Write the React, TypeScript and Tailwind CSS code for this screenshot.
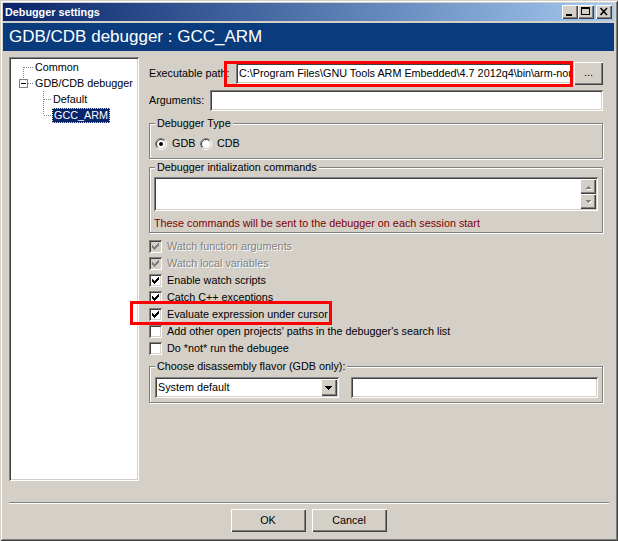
import React from 'react';

const sunken = 'shadow-[inset_1px_1px_#808080,inset_-1px_-1px_#ffffff,inset_2px_2px_#404040,inset_-2px_-2px_#d4d0c8]';
const raised = 'shadow-[inset_1px_1px_#ffffff,inset_-1px_-1px_#404040,inset_-2px_-2px_#808080]';

// classic 7x7 check mark, rows of [from, to]
const checkRows: [number, number][][] = [
  [[6, 6]],
  [[5, 6]],
  [[0, 0], [4, 6]],
  [[0, 1], [3, 5]],
  [[0, 4]],
  [[1, 3]],
  [[2, 2]],
];

const CheckBox: React.FC<{ checked?: boolean; disabled?: boolean }> = ({ checked, disabled }) => (
  <div className={`w-[13px] h-[13px] shrink-0 ${sunken} ${disabled ? 'bg-[#d4d0c8]' : 'bg-white'}`}>
    {checked && (
      <svg width="13" height="13" shapeRendering="crispEdges">
        {checkRows.map((row, y) =>
          row.map(([a, b], i) => (
            <rect key={`${y}-${i}`} x={3 + a} y={3 + y} width={b - a + 1} height={1} fill={disabled ? '#808080' : '#000'} />
          ))
        )}
      </svg>
    )}
  </div>
);

const Radio: React.FC<{ checked?: boolean }> = ({ checked }) => (
  <svg width="12" height="12" className="shrink-0">
    <circle cx="6" cy="6" r="4.5" fill="#fff" />
    <path d="M2.1 9.9 A5.5 5.5 0 0 1 9.9 2.1" stroke="#808080" fill="none" />
    <path d="M9.9 2.1 A5.5 5.5 0 0 1 2.1 9.9" stroke="#fff" fill="none" />
    <path d="M2.8 9.2 A4.5 4.5 0 0 1 9.2 2.8" stroke="#404040" fill="none" />
    <path d="M9.2 2.8 A4.5 4.5 0 0 1 2.8 9.2" stroke="#d4d0c8" fill="none" />
    {checked && <circle cx="6" cy="6" r="2" fill="#000" />}
  </svg>
);

const TitleBtn: React.FC<{ kind: 'min' | 'max' | 'close'; className?: string }> = ({ kind, className }) => (
  <div className={`w-[16px] h-[14px] bg-[#d4d0c8] ${raised} ${className ?? ''}`}>
    <svg width="16" height="14" shapeRendering="crispEdges">
      {kind === 'min' && <rect x="4" y="9" width="6" height="2" fill="#000" />}
      {kind === 'max' && (
        <g fill="none" stroke="#000">
          <rect x="3.5" y="2.5" width="8" height="7" />
          <line x1="3" y1="3.5" x2="12" y2="3.5" />
        </g>
      )}
      {kind === 'close' && (
        <g stroke="#000" strokeWidth="1.6" shapeRendering="auto">
          <line x1="4.5" y1="3" x2="11" y2="10" />
          <line x1="11" y1="3" x2="4.5" y2="10" />
        </g>
      )}
    </svg>
  </div>
);

const Group: React.FC<{ label: string; className?: string; children?: React.ReactNode }> = ({ label, className, children }) => (
  <div className={`relative border border-[#808080] shadow-[inset_1px_1px_#ffffff,1px_1px_#ffffff] ${className ?? ''}`}>
    <span className="absolute -top-[7px] left-[5px] bg-[#d4d0c8] px-[2px] leading-[13px]">{label}</span>
    {children}
  </div>
);

const Dot = 'stroke-[#808080] [stroke-dasharray:1_1]';

const TreeRow: React.FC<{ lines: React.ReactNode; indent: number; children: React.ReactNode }> = ({ lines, indent, children }) => (
  <div className="h-[16px] flex items-center">
    <svg width={indent} height="16" shapeRendering="crispEdges" className="shrink-0">
      {lines}
    </svg>
    {children}
  </div>
);

const Tree: React.FC = () => (
  <div className={`w-[130px] h-[424px] bg-white ${sunken} p-[2px] shrink-0`}>
    <TreeRow
      indent={24}
      lines={
        <>
          <line x1="12.5" y1="8" x2="12.5" y2="16" className={Dot} />
          <line x1="13" y1="8.5" x2="23" y2="8.5" className={Dot} />
        </>
      }
    >
      <span>Common</span>
    </TreeRow>
    <TreeRow
      indent={24}
      lines={
        <>
          <line x1="12.5" y1="0" x2="12.5" y2="4" className={Dot} />
          <rect x="8.5" y="4.5" width="8" height="8" fill="#fff" stroke="#808080" />
          <line x1="10" y1="8.5" x2="15" y2="8.5" stroke="#000" />
          <line x1="17" y1="8.5" x2="23" y2="8.5" className={Dot} />
        </>
      }
    >
      <span>GDB/CDB debugger</span>
    </TreeRow>
    <TreeRow
      indent={42}
      lines={
        <>
          <line x1="32.5" y1="0" x2="32.5" y2="16" className={Dot} />
          <line x1="33" y1="8.5" x2="41" y2="8.5" className={Dot} />
        </>
      }
    >
      <span>Default</span>
    </TreeRow>
    <TreeRow
      indent={41}
      lines={
        <>
          <line x1="32.5" y1="0" x2="32.5" y2="8" className={Dot} />
          <line x1="33" y1="8.5" x2="41" y2="8.5" className={Dot} />
        </>
      }
    >
      <span className="bg-[#0a246a] text-white border border-dotted border-[#e8dca0] px-[1px] leading-[13px]">GCC_ARM</span>
    </TreeRow>
  </div>
);

const Field: React.FC<{ className?: string; children?: React.ReactNode }> = ({ className, children }) => (
  <div className={`h-[21px] bg-white ${sunken} flex items-center pl-[3px] pr-[2px] overflow-hidden whitespace-nowrap ${className ?? ''}`}>
    {children}
  </div>
);

const options: { label: string; checked?: boolean; disabled?: boolean }[] = [
  { label: 'Watch function arguments', checked: true, disabled: true },
  { label: 'Watch local variables', checked: true, disabled: true },
  { label: 'Enable watch scripts', checked: true },
  { label: 'Catch C++ exceptions', checked: true },
  { label: 'Evaluate expression under cursor', checked: true },
  { label: "Add other open projects' paths in the debugger's search list" },
  { label: 'Do *not* run the debugee' },
];

export default function App() {
  return (
    <div className="w-[618px] h-[541px] bg-[#d4d0c8] text-black text-[10.8px] leading-[13px] font-['Liberation_Sans',Arial,sans-serif] flex flex-col pt-[3px] pl-[3px] pr-[4px] shadow-[inset_1px_1px_#d4d0c8,inset_-1px_-1px_#404040,inset_2px_2px_#ffffff,inset_-2px_-2px_#808080] overflow-hidden">
      {/* title bar */}
      <div className="h-[18px] flex items-center bg-linear-to-r from-[#0a246a] to-[#a6caf0] pl-[2px] pr-[2px]">
        <span className="flex-1 text-white font-bold">Debugger settings</span>
        <TitleBtn kind="min" />
        <TitleBtn kind="max" />
        <TitleBtn kind="close" className="ml-[2px]" />
      </div>

      {/* header */}
      <div className="mt-[2px] h-[28px] bg-[#0a3c7d] text-white text-[17px] leading-[20px] flex items-center pl-[6px]">
        GDB/CDB debugger : GCC_ARM
      </div>

      <div className="flex pt-[6px] pl-[6px]">
        <Tree />

        <div className="ml-[10px] w-[454px] flex flex-col">
          {/* executable path */}
          <div className="relative mt-[5px] h-[23px] flex items-center">
            <span className="w-[87px] shrink-0">Executable path:</span>
            <Field className="flex-1">
              {'C:\\Program Files\\GNU Tools ARM Embedded\\4.7 2012q4\\bin\\arm-none-eabi-gdb.exe'}
            </Field>
            <div className={`ml-[2px] w-[29px] h-[23px] shrink-0 ${raised} flex items-center justify-center pb-[2px]`}>...</div>
            <div className="absolute left-[75px] -top-[1px] w-[349px] h-[26px] border-[3px] border-[#ff0000]" />
          </div>

          {/* arguments */}
          <div className="mt-[5px] flex items-center">
            <span className="w-[61px] shrink-0">Arguments:</span>
            <Field className="flex-1" />
          </div>

          <Group label="Debugger Type" className="mt-[12px] h-[36px]">
            <div className="flex items-center pt-[13px] pl-[5px]">
              <div className="w-[45px] flex items-center gap-[5px]">
                <Radio checked />
                <span>GDB</span>
              </div>
              <div className="flex items-center gap-[5px]">
                <Radio />
                <span>CDB</span>
              </div>
            </div>
          </Group>

          <Group label="Debugger intialization commands" className="mt-[8px] h-[66px]">
            <div className="pt-[9px] px-[4px] flex flex-col">
              <div className={`h-[34px] bg-white ${sunken} flex justify-end p-[2px]`}>
                <div className="flex flex-col">
                  {['up', 'down'].map(d => (
                    <div key={d} className={`w-[16px] h-[15px] bg-[#d4d0c8] ${raised}`}>
                      <svg width="16" height="15" shapeRendering="crispEdges">
                        {d === 'up' ? (
                          <>
                            <path d="M6 9 h5 v1 h-5z M7 8 h3 v1 h-3z M8 7 h1 v1 h-1z" fill="#fff" transform="translate(1 1)" />
                            <path d="M6 9 h5 v1 h-5z M7 8 h3 v1 h-3z M8 7 h1 v1 h-1z" fill="#808080" />
                          </>
                        ) : (
                          <>
                            <path d="M6 6 h5 v1 h-5z M7 7 h3 v1 h-3z M8 8 h1 v1 h-1z" fill="#fff" transform="translate(1 1)" />
                            <path d="M6 6 h5 v1 h-5z M7 7 h3 v1 h-3z M8 8 h1 v1 h-1z" fill="#808080" />
                          </>
                        )}
                      </svg>
                    </div>
                  ))}
                </div>
              </div>
              <span className="mt-[6px] text-[#800000] leading-[13px]">These commands will be sent to the debugger on each session start</span>
            </div>
          </Group>

          {/* options */}
          <div className="mt-[5px] flex flex-col">
            {options.map(o => (
              <div key={o.label} className="relative h-[17px] flex items-center gap-[5px]">
                <CheckBox checked={o.checked} disabled={o.disabled} />
                <span className={o.disabled ? 'text-[#808080] [text-shadow:1px_1px_#ffffff]' : ''}>{o.label}</span>
                {o.label.startsWith('Evaluate') && (
                  <div className="absolute -left-[19px] -top-[5px] w-[202px] h-[24px] border-[3px] border-[#ff0000]" />
                )}
              </div>
            ))}
          </div>

          <Group label="Choose disassembly flavor (GDB only):" className="mt-[9px] h-[37px]">
            <div className="flex pt-[10px] pl-[5px] pr-[4px]">
              <div className={`w-[184px] h-[21px] bg-white ${sunken} flex items-center p-[2px]`}>
                <span className="flex-1 pl-[1px]">System default</span>
                <div className={`w-[16px] h-[17px] bg-[#d4d0c8] ${raised}`}>
                  <svg width="16" height="17" shapeRendering="crispEdges">
                    <path d="M4 7 h7 v1 h-7z M5 8 h5 v1 h-5z M6 9 h3 v1 h-3z M7 10 h1 v1 h-1z" fill="#000" />
                  </svg>
                </div>
              </div>
              <Field className="ml-[12px] flex-1" />
            </div>
          </Group>
        </div>
      </div>

      {/* separator */}
      <div className="mt-[21px] ml-[6px] mr-[5px] h-[2px] border-t border-[#808080] border-b border-b-white" />

      <div className="mt-[5px] flex justify-center gap-[6px]">
        <div className={`w-[75px] h-[23px] ${raised} flex items-center justify-center`}>OK</div>
        <div className={`w-[75px] h-[23px] ${raised} flex items-center justify-center`}>Cancel</div>
      </div>
    </div>
  );
}
